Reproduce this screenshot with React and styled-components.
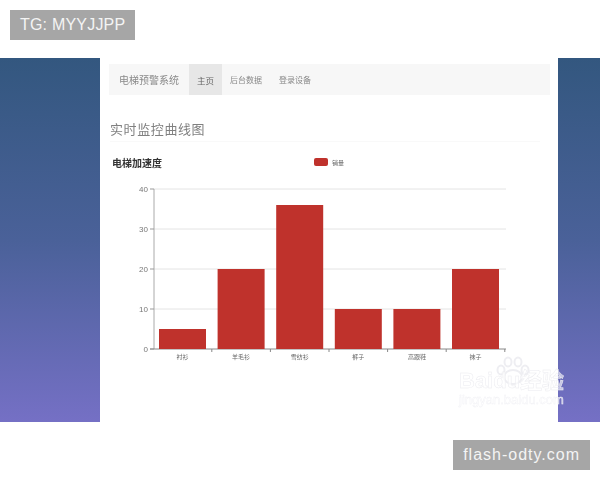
import React from 'react'
import styled, { createGlobalStyle } from 'styled-components'

const GlobalStyle = createGlobalStyle`
  html, body {
    margin: 0;
    padding: 0;
    background: #fff;
    font-family: "Liberation Sans", "Noto Sans CJK SC", sans-serif;
  }
`

const bars = [
  { name: '衬衫', value: 5 },
  { name: '羊毛衫', value: 20 },
  { name: '雪纺衫', value: 36 },
  { name: '裤子', value: 10 },
  { name: '高跟鞋', value: 10 },
  { name: '袜子', value: 20 },
]

const Chart = () => {
  const y = (v) => 166 - v * 4
  return (
    <ChartSvg viewBox="0 0 420 185" width="420" height="185">
      {[40, 30, 20, 10].map((v) => (
        <line key={v} x1="54" x2="406" y1={y(v)} y2={y(v)} stroke="#e4e4e4" strokeWidth="1" />
      ))}
      <line x1="54" x2="54" y1={y(40)} y2={y(0)} stroke="#aaa" strokeWidth="1" />
      <line x1="50" x2="406" y1={y(0)} y2={y(0)} stroke="#888" strokeWidth="1" />
      {[40, 30, 20, 10, 0].map((v) => (
        <g key={v}>
          <line x1="50" x2="54" y1={y(v)} y2={y(v)} stroke="#999" strokeWidth="1" />
          <text x="48" y={y(v) + 3} textAnchor="end" fontSize="8" fill="#777" fontFamily="Liberation Sans">{v}</text>
        </g>
      ))}
      {bars.map((b, i) => {
        const left = 59 + i * 58.6
        return (
          <g key={b.name}>
            <rect x={left} y={y(b.value)} width="47" height={b.value * 4} fill="#bf322c" />
            <text x={left + 23.5} y="176" textAnchor="middle" fontSize="6" fill="#666" fontFamily="Noto Sans CJK SC">{b.name}</text>
            <line x1={left + 52.8} x2={left + 52.8} y1="166" y2="169" stroke="#888" strokeWidth="1" />
          </g>
        )
      })}
    </ChartSvg>
  )
}

const App = () => {
  return (
    <Page>
      <GlobalStyle />
      <TopBar>
        <Tag>TG: MYYJJPP</Tag>
      </TopBar>
      <Hero>
        <Sheet>
          <Blurred>
            <NavBar>
              <Brand>电梯预警系统</Brand>
              <NavItem $active>主页</NavItem>
              <NavItem>后台数据</NavItem>
              <NavItem>登录设备</NavItem>
            </NavBar>
            <Heading>实时监控曲线图</Heading>
            <ChartHead>
              <ChartTitle>电梯加速度</ChartTitle>
              <Legend>
                <LegendSwatch />
                <LegendLabel>销量</LegendLabel>
              </Legend>
            </ChartHead>
            <Chart />
          </Blurred>
        </Sheet>
        <Watermark>
          <Paw viewBox="0 0 36 30" width="36" height="30">
            <g fill="none" stroke="#eeeef2" strokeWidth="2">
              <ellipse cx="18" cy="21" rx="9" ry="7" />
              <ellipse cx="6" cy="14" rx="3.5" ry="4.5" />
              <ellipse cx="13" cy="6" rx="3.5" ry="4.5" />
              <ellipse cx="23" cy="6" rx="3.5" ry="4.5" />
              <ellipse cx="30" cy="14" rx="3.5" ry="4.5" />
            </g>
          </Paw>
          <WatermarkBrand>Baidu经验</WatermarkBrand>
          <WatermarkUrl>jingyan.baidu.com</WatermarkUrl>
        </Watermark>
      </Hero>
      <BottomBar>
        <Tag $wide>flash-odty.com</Tag>
      </BottomBar>
    </Page>
  )
}

const Page = styled.div`
  width: 600px;
  height: 480px;
  overflow: hidden;
  background: #fff;
`
const TopBar = styled.div`
  height: 58px;
  padding: 10px 0 0 10px;
  box-sizing: border-box;
`
const Tag = styled.div`
  display: inline-block;
  height: 30px;
  line-height: 30px;
  padding: 0 10px;
  background: #a6a6a6;
  color: #f4f4f4;
  font-size: 16px;
  letter-spacing: ${(p) => (p.$wide ? '1px' : '0.2px')};
`
const Hero = styled.div`
  position: relative;
  height: 364px;
  background: linear-gradient(180deg, #33577f 0%, #4a6199 50%, #7570c5 100%);
  padding-left: 100px;
`
const Sheet = styled.div`
  width: 458px;
  height: 364px;
  background: #fff;
  overflow: hidden;
`
const Blurred = styled.div`
  filter: blur(0.6px);
  padding: 6px 8px 0 9px;
`
const NavBar = styled.div`
  display: flex;
  align-items: center;
  height: 31px;
  background: #f7f7f7;
  color: #888;
`
const Brand = styled.div`
  font-size: 10px;
  padding: 0 10px 0 10px;
  color: #8a8a8a;
  font-family: "Noto Sans CJK SC", sans-serif;
`
const NavItem = styled.div`
  height: 100%;
  display: flex;
  align-items: center;
  padding: 0 8px;
  margin-right: ${(p) => (p.$active ? '0' : '1px')};
  font-size: ${(p) => (p.$active ? '8.5px' : '8px')};
  font-family: "Noto Sans CJK SC", sans-serif;
  color: ${(p) => (p.$active ? '#666' : '#888')};
  background: ${(p) => (p.$active ? '#e7e7e7' : 'transparent')};
`
const Heading = styled.div`
  margin: 24px 0 0 1px;
  padding-bottom: 3px;
  font-size: 13px;
  line-height: 19px;
  color: #808080;
  letter-spacing: 0.6px;
  font-family: "Noto Sans CJK SC", sans-serif;
  border-bottom: 1px solid #f9f9f9;
  width: 430px;
`
const ChartHead = styled.div`
  display: flex;
  align-items: center;
  height: 16px;
  margin-top: 12px;
  padding-left: 3px;
`
const ChartTitle = styled.div`
  width: 202px;
  font-size: 10px;
  font-weight: 700;
  color: #333;
  font-family: "Noto Sans CJK SC", sans-serif;
`
const Legend = styled.div`
  display: flex;
  align-items: center;
  gap: 4px;
`
const LegendSwatch = styled.span`
  width: 14px;
  height: 8px;
  border-radius: 2px;
  background: #bf322c;
`
const LegendLabel = styled.span`
  font-size: 6px;
  color: #666;
  font-family: "Noto Sans CJK SC", sans-serif;
`
const ChartSvg = styled.svg`
  display: block;
  margin-top: 13px;
  margin-left: -9px;
`
const Watermark = styled.div`
  position: absolute;
  left: 459px;
  top: 298px;
  width: 112px;
  height: 60px;
  color: rgba(255, 255, 255, 0.6);
  filter: blur(0.7px);
`
const Paw = styled.svg`
  position: absolute;
  left: 36px;
  top: 0;
`
const WatermarkBrand = styled.div`
  position: absolute;
  left: 0;
  top: 13px;
  font-size: 22px;
  line-height: 24px;
  font-weight: 700;
  white-space: nowrap;
  -webkit-text-stroke: 0.5px #ececf0;
`
const WatermarkUrl = styled.div`
  position: absolute;
  left: 0;
  top: 37px;
  font-size: 13px;
  line-height: 14px;
  white-space: nowrap;
  -webkit-text-stroke: 0.4px #f0f0f4;
`
const BottomBar = styled.div`
  height: 58px;
  padding: 18px 10px 0 0;
  box-sizing: border-box;
  display: flex;
  justify-content: flex-end;
  align-items: flex-start;
`

export default App
